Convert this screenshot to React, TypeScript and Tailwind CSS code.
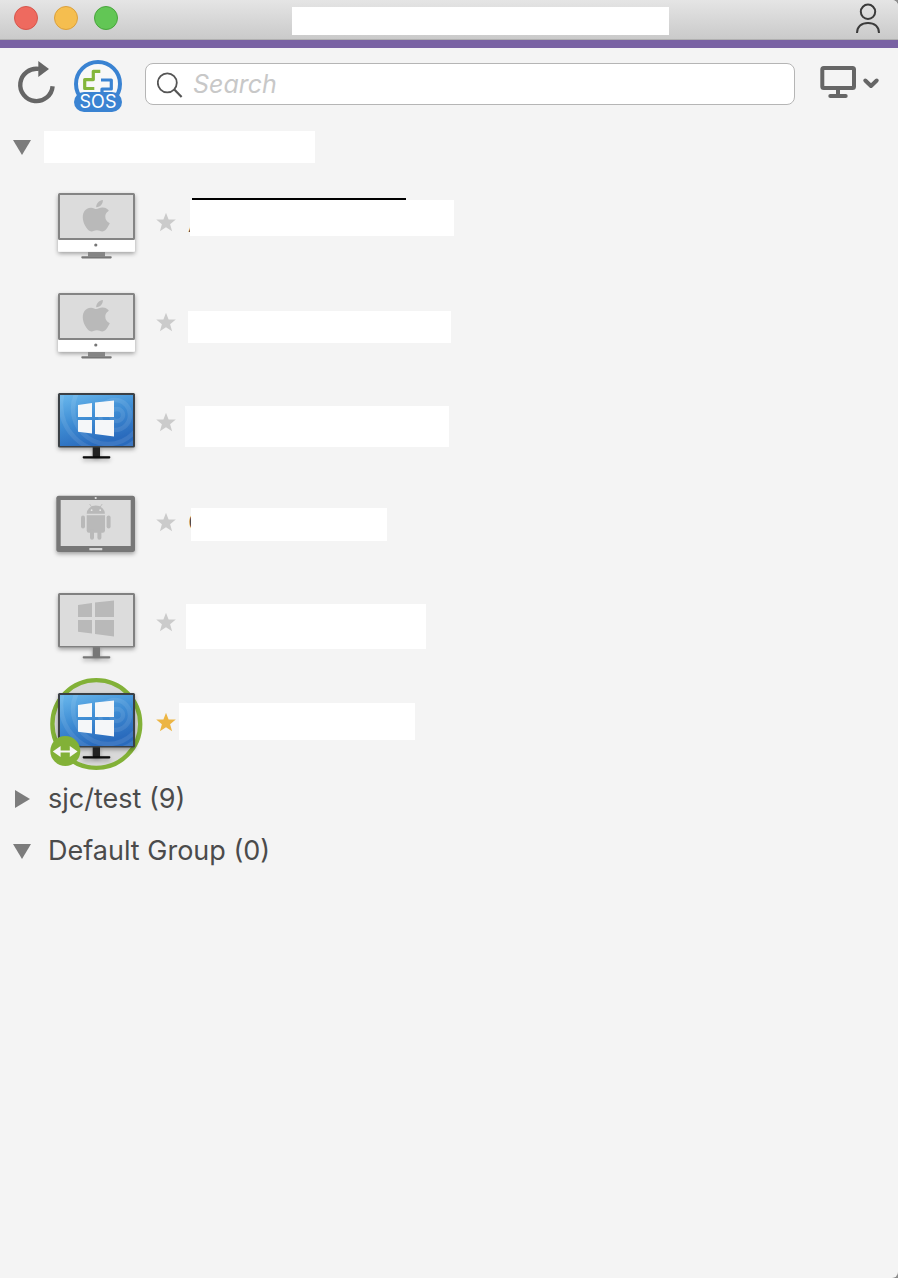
import { useState } from "react";
import clsx from "clsx";

type DeviceKind = "mac" | "windows" | "tablet";

type Device = {
  id: number;
  kind: DeviceKind;
  online?: boolean;
  connected?: boolean;
  favorite?: boolean;
  underline?: boolean;
  initial?: string;
  // size and spacing of the block that covers the device name
  cover: string;
};

const devices: Device[] = [
  { id: 1, kind: "mac", initial: "A", underline: true, cover: "ml-[14px] mt-[27px] h-9 w-[264px]" },
  { id: 2, kind: "mac", cover: "ml-3 mt-[38px] h-8 w-[263px]" },
  { id: 3, kind: "windows", online: true, cover: "ml-[9px] mt-[33px] h-[41px] w-[264px]" },
  { id: 4, kind: "tablet", initial: "C", cover: "ml-[15px] mt-[35px] h-[33px] w-[196px]" },
  { id: 5, kind: "windows", cover: "ml-[10px] mt-[31px] h-[45px] w-[240px]" },
  { id: 6, kind: "windows", online: true, connected: true, favorite: true, cover: "ml-[3px] mt-[30px] h-[37px] w-[236px]" },
];

function Mac() {
  return (
    <>
      <g filter="url(#shadow)">
        <rect x="12" y="20" width="77" height="58.7" rx="1.5" fill="#fff" />
      </g>
      <rect x="42" y="79" width="17" height="4.5" fill="#858585" />
      <rect x="35.3" y="83.2" width="30.4" height="2.2" rx="0.8" fill="#757575" />
      <rect x="13" y="21" width="75" height="45" rx="0.5" fill="#dcdcdc" stroke="#848484" strokeWidth="2" />
      <circle cx="49.8" cy="72" r="1.6" fill="#757575" />
      <path
        transform="translate(33.7 27) scale(1.38 1.31)"
        fill="#b9b9b9"
        d="M12.152 6.896c-.948 0-2.415-1.078-3.96-1.04-2.04.027-3.91 1.183-4.961 3.014-2.117 3.675-.546 9.103 1.519 12.09 1.013 1.454 2.208 3.09 3.792 3.039 1.52-.065 2.09-.987 3.935-.987 1.831 0 2.35.987 3.96.948 1.637-.026 2.676-1.48 3.676-2.948 1.156-1.688 1.636-3.325 1.662-3.415-.039-.013-3.182-1.221-3.22-4.857-.026-3.04 2.48-4.494 2.597-4.559-1.429-2.09-3.623-2.324-4.39-2.376-2-.156-3.675 1.09-4.61 1.09zM15.53 3.83c.843-1.012 1.4-2.427 1.245-3.83-1.207.052-2.662.805-3.532 1.818-.78.896-1.454 2.338-1.273 3.714 1.338.104 2.715-.688 3.559-1.701"
      />
    </>
  );
}

function WindowsPc({ online }: { online?: boolean }) {
  return (
    <>
      <g filter="url(#shadow)">
        <rect x="46.7" y="74" width="7.3" height="10" fill={online ? "#202220" : "#777"} />
        <rect x="36.7" y="83.2" width="27.6" height="2.2" rx="0.8" fill={online ? "#080808" : "#777"} />
        <rect x="12" y="20" width="77" height="54.6" rx="1.5" fill={online ? "#3a3f45" : "#808080"} />
      </g>
      <rect x="14" y="22" width="73" height="51" fill={online ? "url(#screen)" : "#dcdcdc"} />
      {online && (
        <g clipPath="url(#screenClip)" fill="none" stroke="#fff" strokeOpacity="0.09" strokeWidth="4.5">
          <circle cx="71" cy="42" r="6" />
          <circle cx="69" cy="42" r="15" />
          <circle cx="62" cy="36" r="35" />
          <circle cx="61" cy="32" r="46" />
        </g>
      )}
      <path
        fill={online ? "#f5f7f9" : "#b9b9b9"}
        d="M32 32L46 30V44H32zM49 29.6L68 27.6V44H49zM32 47H46V60.6L32 58.7zM49 47H68V63.6L49 61z"
      />
    </>
  );
}

function Tablet() {
  return (
    <>
      <g filter="url(#shadow)">
        <rect x="10.3" y="22.7" width="78.7" height="56.3" rx="2.5" fill="#777" />
      </g>
      <rect x="14.7" y="27" width="70" height="46" fill="#dcdcdc" />
      <circle cx="49.7" cy="25" r="1.1" fill="#e4e4e4" />
      <rect x="43.3" y="75" width="13" height="2.3" rx="0.6" fill="#d6d6d6" />
      <g fill="#b9b9b9">
        <path d="M40.7 40.8a9.1 8.3 0 0 1 18.2 0z" />
        <path d="M43.6 31l2.4 3.6M56.2 31l-2.4 3.6" stroke="#b9b9b9" strokeWidth="0.8" />
        <path d="M40.7 42.2H59V57.5a2.2 2.2 0 0 1-2.2 2.2H42.9a2.2 2.2 0 0 1-2.2-2.2z" />
        <rect x="35" y="42.5" width="4" height="13" rx="2" />
        <rect x="60.6" y="42.5" width="4" height="13" rx="2" />
        <rect x="44" y="56" width="4" height="10.8" rx="2" />
        <rect x="51.4" y="56" width="4" height="10.8" rx="2" />
      </g>
      <circle cx="45.6" cy="37.2" r="0.9" fill="#e6e6e6" />
      <circle cx="54.2" cy="37.2" r="0.9" fill="#e6e6e6" />
    </>
  );
}

function DeviceIcon({ device }: { device: Device }) {
  return (
    <svg viewBox="0 0 100 100" className="size-[100px]" aria-hidden="true">
      {device.connected && <circle cx="50.3" cy="51" r="43.9" fill="#d9d9d9" stroke="#82b137" strokeWidth="4.4" />}
      {device.kind === "mac" && <Mac />}
      {device.kind === "windows" && <WindowsPc online={device.online} />}
      {device.kind === "tablet" && <Tablet />}
      {device.connected && (
        <>
          <circle cx="19.3" cy="78" r="15" fill="#82b137" />
          <path d="M6.8 78.5L14.6 73V77.5H23.8V73L31.6 78.5L23.8 84V79.5H14.6V84z" fill="#f6f6f6" />
        </>
      )}
    </svg>
  );
}

function IconDefs() {
  return (
    <svg className="absolute size-0" aria-hidden="true">
      <defs>
        <linearGradient id="screen" gradientUnits="userSpaceOnUse" x1="25" y1="22" x2="40" y2="74">
          <stop offset="0" stopColor="#65b3ea" />
          <stop offset="0.5" stopColor="#3f8dd4" />
          <stop offset="1" stopColor="#2a6bbd" />
        </linearGradient>
        <clipPath id="screenClip">
          <rect x="14" y="22" width="73" height="51" />
        </clipPath>
        <filter id="shadow" x="-20%" y="-20%" width="140%" height="150%">
          <feDropShadow dx="0" dy="2" stdDeviation="2" floodOpacity="0.35" />
        </filter>
      </defs>
    </svg>
  );
}

function TitleBar() {
  return (
    <header className="flex h-10 items-start border-b border-[#b0b0b0] bg-linear-to-b from-[#e5e5e5] to-[#cacaca] pr-4 pl-[14px]">
      <div className="flex gap-4 pt-[6px]">
        <button type="button" aria-label="Close" className="size-6 rounded-full border border-[#d6564c] bg-[#ee6a5f]" />
        <button type="button" aria-label="Minimize" className="size-6 rounded-full border border-[#dba03c] bg-[#f5be4f]" />
        <button type="button" aria-label="Zoom" className="size-6 rounded-full border border-[#48a53c] bg-[#62c655]" />
      </div>
      <div className="mt-[7px] mr-[185px] ml-[174px] h-7 flex-1 bg-white" />
      <button type="button" aria-label="Account" className="mt-[2px] shrink-0">
        <svg width="28" height="32" viewBox="0 0 28 32" fill="none" stroke="#3b3b3b" strokeWidth="2">
          <circle cx="14" cy="9.8" r="7.2" />
          <path d="M3 31C3 24.6 7.6 21 14 21S25 24.6 25 31" />
        </svg>
      </button>
    </header>
  );
}

function Toolbar() {
  const [query, setQuery] = useState("");

  return (
    <div className="flex h-[72px] items-center pr-4 pl-4">
      <button type="button" aria-label="Refresh" className="mr-[18px] shrink-0">
        <svg width="40" height="48" viewBox="0 0 40 48">
          <path d="M36.6 26.2A16.2 16.2 0 1 1 23 8.9" fill="none" stroke="#666" strokeWidth="4.4" />
          <path d="M22.3 1L33 9L22.3 17z" fill="#666" />
        </svg>
      </button>
      <button type="button" aria-label="SOS" className="shrink-0">
        <svg width="48" height="56" viewBox="0 -4 48 56">
          <circle cx="24" cy="24" r="22" fill="#f8f8f8" stroke="#3a83d2" strokeWidth="4" />
          <rect x="0" y="32" width="48" height="20" rx="10" fill="#3a83d2" />
          <path d="M26.3 11.3H19.3V19.6H10.7V28.5H20.3" fill="none" stroke="#84b63b" strokeWidth="3.2" strokeLinejoin="round" />
          <path d="M27 20H37.3V29H28V33" fill="none" stroke="#3a83d2" strokeWidth="3.2" strokeLinejoin="round" />
          <text x="24" y="48" textAnchor="middle" fontSize="18" fill="#fff">
            SOS
          </text>
        </svg>
      </button>
      <label className="mr-6 ml-[23px] flex h-[42px] min-w-0 flex-1 items-center gap-[9px] rounded-lg border border-[#b5b5b5] bg-white pt-[2px] pl-[11px]">
        <svg width="27" height="28" viewBox="0 0 27 28" className="shrink-0" fill="none" stroke="#555">
          <circle cx="10.3" cy="11.8" r="9.5" strokeWidth="1.8" />
          <path d="M17.3 18.6L24.6 26" strokeWidth="2.2" />
        </svg>
        <input
          type="text"
          aria-label="Search"
          placeholder="Search"
          value={query}
          onChange={(e) => setQuery(e.target.value)}
          className="min-w-0 flex-1 text-[25px] italic outline-none placeholder:text-[#c8c8c8]"
        />
      </label>
      <button type="button" aria-label="View" className="shrink-0">
        <svg width="63" height="40" viewBox="0 0 63 40" fill="none" stroke="#666" strokeWidth="4" strokeLinejoin="round" strokeLinecap="round">
          <rect x="3.3" y="4" width="31.7" height="20" rx="1.5" />
          <path d="M19 24V32M11.3 32H26.7" />
          <path d="M46.3 16.5L52 22L57.7 16.5" />
        </svg>
      </button>
    </div>
  );
}

function GroupHeader({ name, open, onToggle }: { name?: string; open: boolean; onToggle: () => void }) {
  return (
    <button
      type="button"
      aria-expanded={open}
      aria-label={name ? undefined : "Group"}
      onClick={onToggle}
      className={clsx("flex h-[52px] w-full items-center pl-[13px] text-left", name ? "gap-[17px]" : "gap-[13px]")}
    >
      <svg width="18" height="18" viewBox="0 0 18 18" fill="#7c7c7c" aria-hidden="true">
        {open ? <path d="M0 2H18L9 17z" /> : <path d="M2 0L17 9L2 18z" />}
      </svg>
      {name ? <span className="text-[27px] text-[#4b4b4b]">{name}</span> : <span className="h-8 w-[271px] bg-white" />}
    </button>
  );
}

function DeviceRow({ device }: { device: Device }) {
  const [favorite, setFavorite] = useState(!!device.favorite);

  return (
    <li className="flex h-[100px] items-center pl-[46px]">
      <DeviceIcon device={device} />
      <button type="button" aria-label="Favorite" onClick={() => setFavorite(!favorite)} className="ml-[10px] shrink-0">
        <svg width="20" height="20" viewBox="0 0 20 20" fill={favorite ? "#ecb544" : "#cbcbcb"}>
          <path d="M10 -0.2L12.6 6.6H19.8L14.1 11.2L16.1 18.2L10 14.2L3.9 18.2L5.9 11.2L0.2 6.6H7.4z" />
        </svg>
      </button>
      <div className="relative h-full flex-1">
        {device.initial && (
          <span className="absolute inset-y-0 left-3 flex items-center text-[27px] text-[#4b4b4b]">{device.initial}</span>
        )}
        {device.underline && <span className="absolute top-[25px] left-4 h-[2px] w-[214px] bg-black" />}
        <div className="relative flex h-full items-start">
          <span className={clsx("bg-white", device.cover)} />
        </div>
      </div>
    </li>
  );
}

export default function App() {
  const [open, setOpen] = useState({ main: true, test: false, fallback: true });

  return (
    <div className="min-h-screen bg-[#8c8c8c]">
      <div className="relative min-h-screen overflow-hidden rounded-r-md bg-[#f4f4f4] font-['Inter','Liberation_Sans',sans-serif]">
        <IconDefs />
        <TitleBar />
        <div className="h-2 bg-[#7962a3]" />
        <Toolbar />
        <main className="pt-px">
          <GroupHeader open={open.main} onToggle={() => setOpen({ ...open, main: !open.main })} />
          {open.main && (
            <ul>
              {devices.map((d) => (
                <DeviceRow key={d.id} device={d} />
              ))}
            </ul>
          )}
          <GroupHeader name="sjc/test (9)" open={open.test} onToggle={() => setOpen({ ...open, test: !open.test })} />
          <GroupHeader name="Default Group (0)" open={open.fallback} onToggle={() => setOpen({ ...open, fallback: !open.fallback })} />
        </main>
      </div>
    </div>
  );
}
